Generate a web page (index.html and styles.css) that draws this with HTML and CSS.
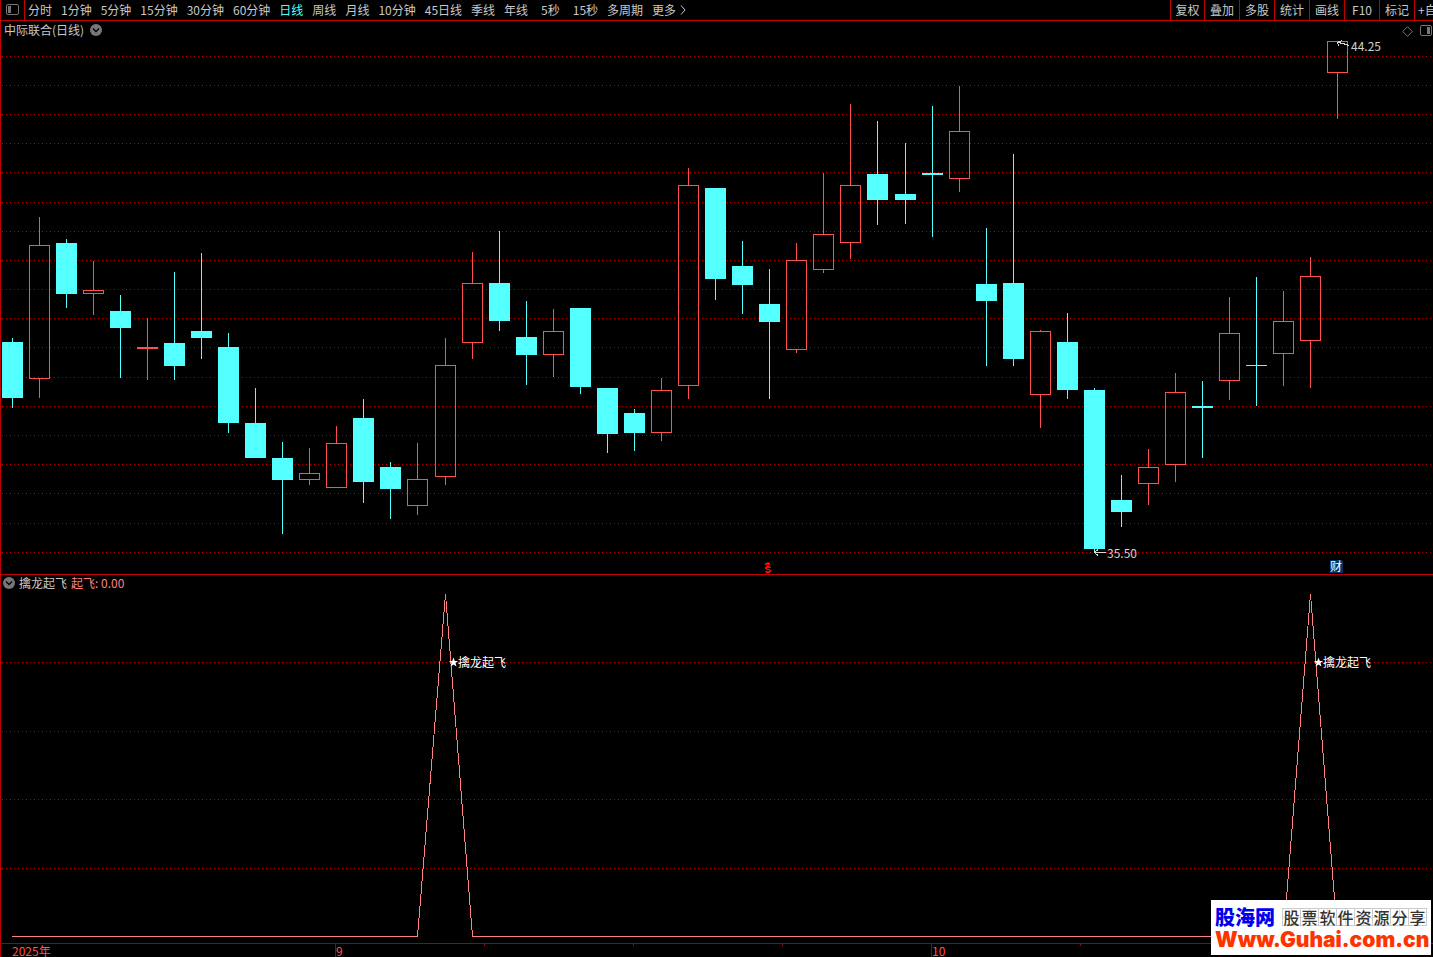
FILE: index.html
```html
<!DOCTYPE html>
<html lang="zh-CN">
<head>
<meta charset="utf-8">
<title>中际联合 日线</title>
<link rel="stylesheet" href="styles.css">
</head>
<body>
<header class="toolbar">
  <button class="panel-toggle" aria-label="侧栏">
    <svg width="13" height="12" viewBox="0 0 13 12"><rect x=".5" y=".5" width="12" height="10" rx="1.5" fill="none" stroke="#777"/><rect x="2" y="2" width="3" height="7" fill="#777"/></svg>
  </button>
  <nav class="periods">
    <button>分时</button><button>1分钟</button><button>5分钟</button><button>15分钟</button><button>30分钟</button><button>60分钟</button><button class="active">日线</button><button>周线</button><button>月线</button><button>10分钟</button><button>45日线</button><button>季线</button><button>年线</button><button class="seconds">5秒</button><button class="seconds">15秒</button><button>多周期</button><button class="more">更多<svg width="6" height="10" viewBox="0 0 6 10"><path d="M1 .5 5 5 1 9.5" fill="none" stroke="#c8c8c8"/></svg></button>
  </nav>
  <div class="tools">
    <button>复权</button><button>叠加</button><button>多股</button><button>统计</button><button>画线</button><button>F10</button><button>标记</button><button class="custom">+自</button>
  </div>
</header>

<main>
  <section class="pane">
    <div class="pane-title">
      <span>中际联合(日线)</span>
      <button class="chevron" aria-label="展开"><svg width="12" height="12" viewBox="0 0 12 12"><circle cx="6" cy="6" r="6" fill="#777"/><path d="M3 4.5 6 7.5 9 4.5" fill="none" stroke="#000" stroke-width="1.3"/></svg></button>
    </div>
    <div class="pane-tools">
      <button aria-label="标记点"><svg width="11" height="11" viewBox="0 0 11 11"><path d="M5.5 .7 10.3 5.5 5.5 10.3 .7 5.5Z" fill="none" stroke="#777"/></svg></button>
      <button aria-label="右侧栏"><svg width="13" height="12" viewBox="0 0 13 12"><rect x=".5" y=".5" width="11" height="10" rx="1.5" fill="none" stroke="#777"/><rect x="7" y="2" width="3" height="7" fill="#777"/></svg></button>
    </div>
    <svg class="chart" viewBox="0 21 1433 553" role="img" aria-label="日线K线图">
      <path class="frame" d="M.5 21V574"/>
      <g id="price-grid" class="grid"></g>
      <g id="candles"></g>
      <path class="pointer" d="M1349 45.5 1343 43.5 1338 42.5M1342 40.5 1337.5 42.5 1339 46M1106 552.5H1095M1098 549.5 1094.5 552.5 1098 555.5"/>
      <text class="price" x="1351" y="51">44.25</text>
      <text class="price" x="1107" y="558">35.50</text>
      <path class="dividend" d="M767 562H769V563H770V565H765V563H767ZM766 566H770V567H771V568H767V569H770V570H771V572H770V573H766V572H765V571H769V570H766V569H765V567H766Z"/>
      <path class="news" d="M1330 560H1341L1343 562V573H1330Z"/>
      <text class="news-text" x="1330" y="571">财</text>
    </svg>
  </section>

  <section class="pane">
    <div class="pane-title indicator">
      <button class="chevron" aria-label="展开"><svg width="12" height="12" viewBox="0 0 12 12"><circle cx="6" cy="6" r="6" fill="#777"/><path d="M3 4.5 6 7.5 9 4.5" fill="none" stroke="#000" stroke-width="1.3"/></svg></button>
      <span>擒龙起飞</span>
      <span class="value">起飞: 0.00</span>
    </div>
    <svg class="chart" viewBox="0 574 1433 369" role="img" aria-label="擒龙起飞指标">
      <path class="frame" d="M0 574.5H1433M.5 574V943"/>
      <g id="signal-grid" class="grid"></g>
      <path class="signal" d="M12 936.5H417.5L445.5 594 472.5 936.5H1283.5L1310.5 594 1337.5 936.5"/>
      <path class="star" id="star" d="M453.5 657.5 454.8 661H458.2L455.5 663 456.5 666.5 453.5 664.5 450.5 666.5 451.5 663 448.8 661H452.2Z"/>
      <use href="#star" x="865"/>
      <text class="signal-text" x="458" y="667">擒龙起飞</text>
      <text class="signal-text" x="1323" y="667">擒龙起飞</text>
    </svg>
  </section>

  <svg class="chart" viewBox="0 943 1433 14" role="img" aria-label="时间轴">
    <path class="frame" d="M.5 943V957"/>
    <path class="axis-line" d="M0 943.5H1433M335.5 943V957M931.5 943V957M484.5 943V946M633.5 943V946M782.5 943V946M1080.5 943V946"/>
    <text class="date" x="12" y="956">2025年</text>
    <text class="date" x="336" y="956">9</text>
    <text class="date" x="932" y="956">10</text>
  </svg>
</main>

<a class="watermark" href="#">
  <span class="brand"><strong>股海网</strong><span class="slogan"><i>股</i><i>票</i><i>软</i><i>件</i><i>资</i><i>源</i><i>分</i><i>享</i></span></span>
  <span class="site">Www.Guhai.com.cn</span>
</a>
<script src="app.js"></script>
</body>
</html>
```
FILE: styles.css
```css
* { box-sizing: border-box; }
body {
  margin: 0;
  min-height: 100vh;
  overflow: hidden;
  position: relative;
  background: #000;
  color: #c8c8c8;
  font: 12px/18px "Noto Sans CJK SC", sans-serif;
}
button {
  padding: 0;
  border: 0;
  background: none;
  color: inherit;
  font: inherit;
  white-space: nowrap;
}
button svg { display: block; }

.toolbar {
  display: flex;
  height: 21px;
  border-bottom: 1px solid #c00000;
  border-left: 1px solid #c00000;
}
.panel-toggle {
  width: 24px;
  flex: none;
  padding-left: 5px;
  border-right: 1px solid #c00000;
}
.periods {
  display: flex;
  flex: 1;
  gap: 9px;
  min-width: 0;
  padding-left: 3px;
  overflow: hidden;
}
.periods .active { color: #54ffff; }
.periods .seconds { padding-left: 4px; }
.more { display: flex; align-items: center; gap: 4px; }
.tools { display: flex; flex: none; }
.tools button { width: 35px; border-left: 1px solid #c00000; }
.tools button:first-child { width: 34px; }
.tools .custom { width: 19px; padding-left: 3px; overflow: hidden; text-align: left; }

.pane { position: relative; }
.pane-title {
  position: absolute;
  top: 0;
  left: 4px;
  display: flex;
  align-items: center;
  gap: 6px;
}
.pane-title.indicator { left: 3px; gap: 4px; }
.value { color: #ff8080; }
.pane-tools {
  position: absolute;
  top: 4px;
  right: 0;
  display: flex;
  align-items: center;
  gap: 7px;
}

.chart {
  display: block;
  width: 100%;
  height: auto;
  font-size: 12px;
  shape-rendering: crispEdges;
}
.frame { fill: none; stroke: #c00000; }
.grid { stroke: #b40000; stroke-dasharray: 1 3; }
.up { fill: none; stroke: #ff5050; }
.down { fill: #54ffff; stroke: none; }
.pointer { fill: none; stroke: #d8d8d8; }
.price { fill: #d0d0d0; }
.dividend { fill: #f00; }
.news { fill: #003366; }
.news-text { fill: #fff; }
.signal { fill: none; stroke: #ff8080; }
.star { fill: #fff; shape-rendering: auto; }
.signal-text { fill: #fff; }
.axis-line { stroke: #a00000; }
.date { fill: #ff5050; }

.watermark {
  position: absolute;
  right: 2px;
  bottom: 2px;
  display: flex;
  flex-direction: column;
  width: 220px;
  height: 55px;
  padding: 5px 0 0 4px;
  background: #fff;
  text-decoration: none;
}
.brand { display: flex; align-items: center; gap: 7px; height: 24px; }
.brand strong { color: #0000f0; font-size: 20px; font-weight: 900; line-height: 24px; }
.slogan { display: flex; border-left: 1px solid #ccc; }
.slogan i {
  width: 18px;
  height: 18px;
  border: 1px solid #ccc;
  border-left: 0;
  background: linear-gradient(#ddd, #ddd) center / 100% 1px no-repeat, linear-gradient(#ddd, #ddd) center / 1px 100% no-repeat;
  color: #333;
  font-size: 16px;
  font-style: normal;
  font-weight: 500;
  line-height: 16px;
  text-align: center;
}
.site {
  color: #ff3300;
  font: 900 21px/22px Inter, "DejaVu Sans", sans-serif;
  white-space: nowrap;
}
```
FILE: app.js
```js
const NS = "http://www.w3.org/2000/svg";

function add(parent, name, attrs) {
  const node = document.createElementNS(NS, name);
  for (const key in attrs) node.setAttribute(key, attrs[key]);
  parent.appendChild(node);
}

function grid(id, rows) {
  const group = document.getElementById(id);
  rows.forEach(y => add(group, "path", { d: `M2 ${y + 0.5}H1433` }));
}
grid("price-grid", [56, 85, 114, 143, 172, 202, 231, 260, 289, 318, 347, 377, 406, 435, 464, 493, 523, 552]);
grid("signal-grid", [662, 731, 799, 868]);

// centre, direction (1 up, 0 down), high, body top, body bottom, low
const bars = [
  [12,0,338,342,398,408],[39,1,217,245,379,398],[66,0,239,243,294,308],[93,1,261,290,294,315],
  [120,0,295,311,328,378],[147,1,318,347,349,380],[174,0,272,343,366,380],[201,0,253,331,338,359],
  [228,0,333,347,423,433],[255,0,388,423,458,458],[282,0,442,458,480,534],[309,1,448,473,480,485],
  [336,1,426,443,488,488],[363,0,399,418,482,503],[390,0,462,467,489,519],[417,1,443,479,506,515],
  [445,1,338,365,477,485],[472,1,252,283,343,359],[499,0,231,283,321,331],[526,0,301,337,355,385],
  [553,1,309,331,355,377],[580,0,308,308,387,394],[607,0,388,388,434,453],[634,0,409,413,433,451],
  [661,1,378,390,433,441],[688,1,168,185,386,399],[715,0,188,188,279,300],[742,0,241,266,285,314],
  [769,0,269,304,322,399],[796,1,243,260,350,353],[823,1,173,234,270,273],[850,1,104,185,243,259],
  [877,0,121,174,200,225],[905,0,143,194,200,224],[932,0,106,173,175,237],[959,1,86,131,179,192],
  [986,0,228,284,301,366],[1013,0,154,283,359,366],[1040,1,330,331,395,428],[1067,0,313,342,390,399],
  [1094,0,388,390,549,552],[1121,0,475,500,512,527],[1148,1,449,467,484,505],[1175,1,373,392,465,482],
  [1202,0,381,406,408,458],[1229,1,297,333,381,400],[1256,0,277,365,366,406],[1283,1,291,321,354,386],
  [1310,1,257,276,341,388],[1337,1,41,41,73,119]
];

const layer = document.getElementById("candles");
for (const [x, up, high, top, bottom, low] of bars) {
  if (up) {
    add(layer, "path", { class: "up", d: `M${x + 0.5} ${high}V${top}M${x + 0.5} ${bottom}V${low}` });
    add(layer, "rect", { class: "up", x: x - 9.5, y: top + 0.5, width: 20, height: bottom - top - 1 });
  } else {
    add(layer, "rect", { class: "down", x: x, y: high, width: 1, height: low - high });
    add(layer, "rect", { class: "down", x: x - 10, y: top, width: 21, height: bottom - top });
  }
}
```
